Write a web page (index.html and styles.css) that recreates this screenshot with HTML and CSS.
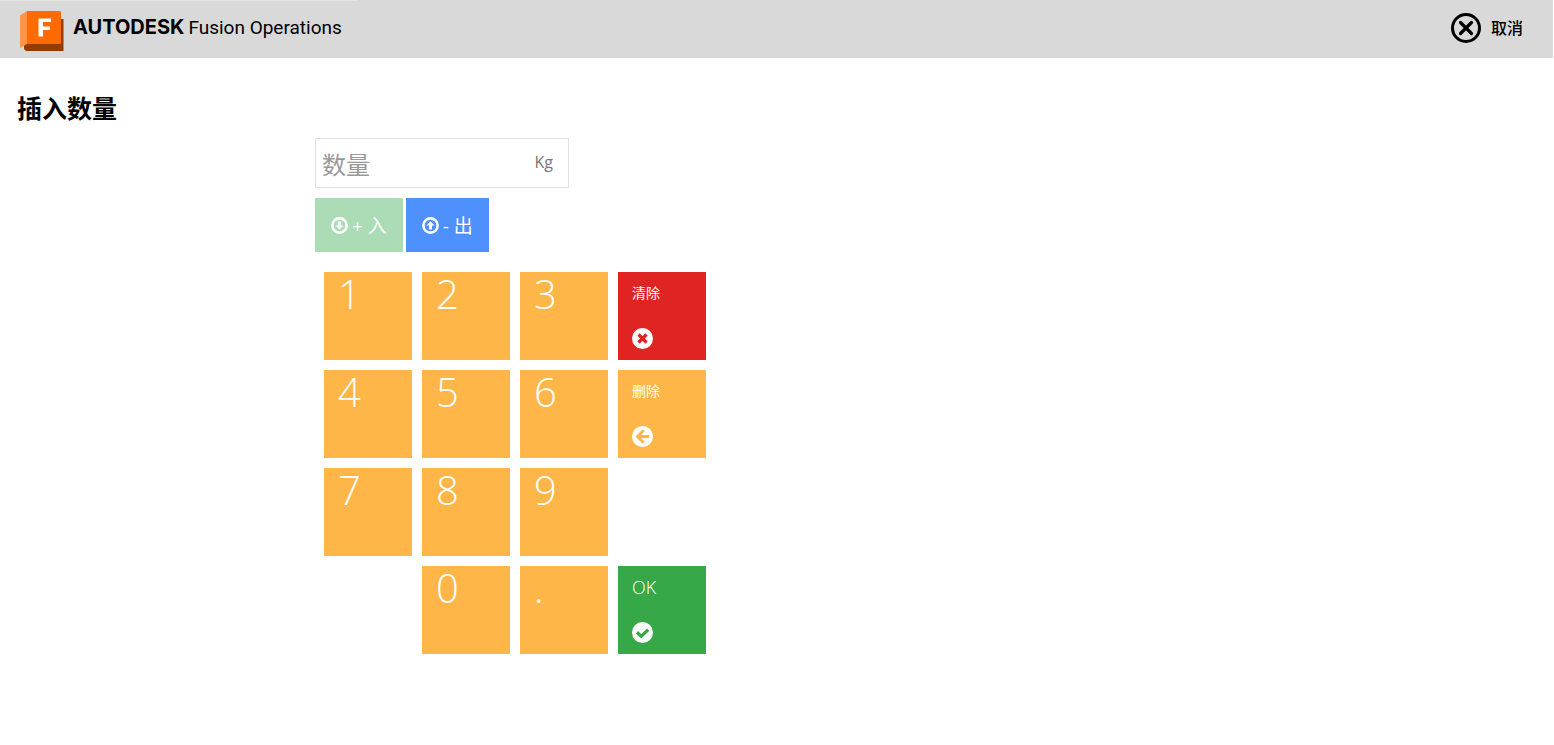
FILE: index.html
```html
<!DOCTYPE html>
<html lang="zh-CN">
<head>
<meta charset="utf-8">
<meta name="viewport" content="width=device-width, initial-scale=1">
<title>插入数量</title>
<link rel="stylesheet" href="styles.css">
</head>
<body>
<header class="topbar">
  <div class="brand">
    <svg class="brand-logo" viewBox="0 0 44 41" aria-hidden="true">
      <path d="M40 8h3.500v32H6l-2-2v-5h36z" fill="#933c00"/>
      <path d="M0 4.500 7 0v33L0 37z" fill="#ff9347"/>
      <path d="M7 0h32.500A1.500 1.500 0 0 1 41 1.500V31.500a1.500 1.500 0 0 1-1.500 1.500H7z" fill="#ff6b00"/>
      <path d="M18.500 7.500H31V11h-8v4.500h7V19h-7v6.500h-4.500z" fill="#fff"/>
    </svg>
    <span class="brand-text"><strong class="brand-maker">AUTODESK</strong><span class="brand-product">Fusion Operations</span></span>
  </div>
  <button class="cancel" type="button">
    <svg class="cancel-icon" viewBox="0 0 30 30" aria-hidden="true">
      <circle cx="15" cy="15" r="13.500" fill="none" stroke="#000" stroke-width="3"/>
      <path d="m9.500 9.500 11 11m0-11-11 11" stroke="#000" stroke-width="3.200" stroke-linecap="round"/>
    </svg>
    <span class="cancel-label">取消</span>
  </button>
</header>
<main class="page">
  <h1 class="title">插入数量</h1>
  <form class="entry">
    <div class="field">
      <input class="field-input" type="text" inputmode="decimal" placeholder="数量" aria-label="数量">
      <span class="field-unit">Kg</span>
    </div>
    <div class="modes">
      <button class="mode mode-in" type="button">
        <svg class="mode-icon" viewBox="0 0 16 16" aria-hidden="true"><circle cx="8" cy="8" r="6.700" fill="none" stroke="#fff" stroke-width="2.400"/><path d="M6.600 4.200h2.800V8h2.400L8 12 4.200 8h2.400z" fill="#fff"/></svg>
        <span>+ 入</span>
      </button>
      <button class="mode mode-out" type="button">
        <svg class="mode-icon" viewBox="0 0 16 16" aria-hidden="true"><circle cx="8" cy="8" r="6.700" fill="none" stroke="#fff" stroke-width="2.400"/><path d="M6.600 11.800h2.800V8h2.400L8 4 4.200 8h2.400z" fill="#fff"/></svg>
        <span>- 出</span>
      </button>
    </div>
    <div class="keypad">
      <button class="key" type="button">1</button>
      <button class="key" type="button">2</button>
      <button class="key" type="button">3</button>
      <button class="key key-action key-clear" type="button">
        <span>清除</span>
        <svg class="key-icon" viewBox="0 0 22 22" aria-hidden="true"><circle cx="11" cy="11" r="11" fill="#fff"/><path d="m6.800 6.800 8.400 8.400m0-8.400-8.400 8.400" stroke="#e02424" stroke-width="3.400"/></svg>
      </button>
      <button class="key" type="button">4</button>
      <button class="key" type="button">5</button>
      <button class="key" type="button">6</button>
      <button class="key key-action" type="button">
        <span>删除</span>
        <svg class="key-icon" viewBox="0 0 22 22" aria-hidden="true"><circle cx="11" cy="11" r="11" fill="#fff"/><path d="M18 11H6m6.300-6.500L5.800 11l6.500 6.500" fill="none" stroke="#ffb648" stroke-width="3"/></svg>
      </button>
      <button class="key" type="button">7</button>
      <button class="key" type="button">8</button>
      <button class="key" type="button">9</button>
      <button class="key key-zero" type="button">0</button>
      <button class="key" type="button">.</button>
      <button class="key key-action key-ok" type="submit">
        <span>OK</span>
        <svg class="key-icon" viewBox="0 0 22 22" aria-hidden="true"><circle cx="11" cy="11" r="11" fill="#fff"/><path d="m5.200 10.700 4.500 4.300L17 8" fill="none" stroke="#36a847" stroke-width="3.400"/></svg>
      </button>
    </div>
  </form>
</main>
</body>
</html>
```
FILE: styles.css
```css
* {
  box-sizing: border-box;
}

body {
  margin: 0;
  background: #fff;
  color: #000;
  font-family: "Open Sans", "Noto Sans CJK SC", sans-serif;
}

button,
input {
  font: inherit;
}

button {
  border: 0;
  padding: 0;
  cursor: pointer;
}

.topbar {
  display: flex;
  justify-content: space-between;
  align-items: stretch;
  height: 58px;
  margin-right: 1px;
  background: #d9d9d9;
}

.brand {
  display: flex;
  align-items: center;
  gap: 9px;
  padding: 3px 16px 0 20px;
  border-top: 1px solid #e4e4e4;
}

.brand-logo {
  width: 44px;
  height: 41px;
}

.brand-text {
  display: flex;
  align-items: baseline;
  gap: 4px;
  padding-bottom: 7px;
  line-height: 24px;
}

.brand-maker {
  font-family: Inter, sans-serif;
  font-size: 20px;
  font-weight: 700;
}

.brand-product {
  font-family: Roboto, sans-serif;
  font-size: 19px;
  font-weight: 400;
}

.cancel {
  display: flex;
  align-items: center;
  gap: 10px;
  padding: 0 30px 2px;
  background: none;
  color: #000;
  font-size: 16px;
  font-weight: 500;
}

.cancel-icon {
  width: 30px;
  height: 30px;
}

.cancel-label {
  padding-bottom: 3px;
}

.page {
  padding: 32px 17px;
}

.title {
  margin: 0;
  font-size: 25px;
  font-weight: 700;
  line-height: 36px;
}

.entry {
  margin: 12px 0 0 298px;
}

.field {
  display: flex;
  align-items: center;
  width: 254px;
  height: 50px;
  padding: 0 15px 0 6px;
  border: 1px solid #e2e2e2;
}

.field-input {
  flex: 1;
  min-width: 0;
  height: 100%;
  padding: 2px 0 0;
  border: 0;
  outline: 0;
  background: none;
  color: #333;
  font-size: 24px;
}

.field-input::placeholder {
  color: #999;
  opacity: 1;
}

.field-unit {
  padding-bottom: 2px;
  color: #777;
  font-size: 16px;
}

.modes {
  display: flex;
  gap: 3px;
  margin-top: 10px;
}

.mode {
  display: flex;
  align-items: center;
  gap: 4px;
  height: 54px;
  padding: 0 16px;
  color: #fff;
  font-size: 19px;
}

.mode-in {
  background: #acdcb5;
}

.mode-out {
  background: #4d90fe;
}

.mode-icon {
  width: 17px;
  height: 17px;
}

.keypad {
  display: grid;
  grid-template-columns: repeat(4, 88px);
  grid-auto-rows: 88px;
  gap: 10px;
  margin: 20px 0 0 9px;
}

.key {
  display: flex;
  flex-direction: column;
  align-items: flex-start;
  padding: 0 14px;
  background: #ffb648;
  color: #fff;
  font-size: 40px;
  font-weight: 300;
  line-height: 43px;
  text-align: left;
}

.key-action {
  justify-content: space-between;
  padding: 10px 14px 11px;
  font-size: 14px;
  font-weight: 400;
  line-height: 22px;
}

.key-clear {
  background: #e02424;
}

.key-zero {
  grid-column: 2;
}

.key-ok {
  background: #36a847;
  font-size: 18px;
  font-weight: 300;
}

.key-icon {
  width: 21px;
  height: 21px;
}
```
